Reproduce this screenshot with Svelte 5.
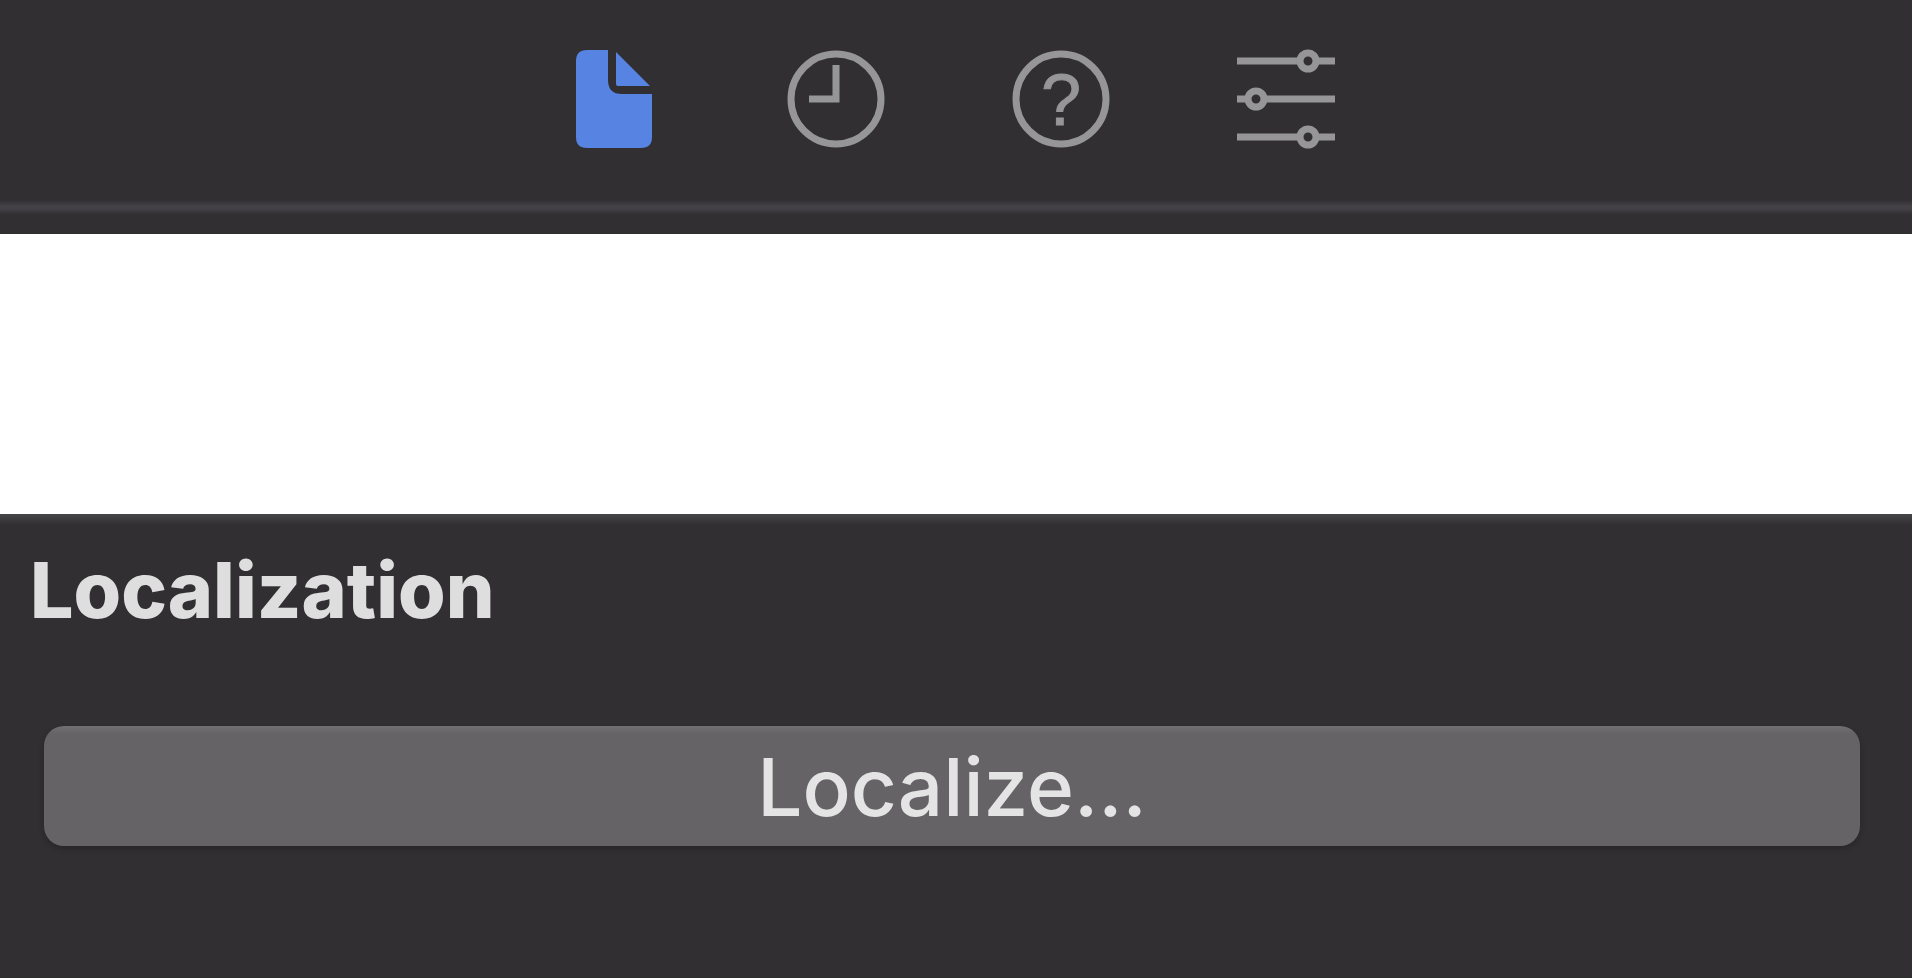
<script lang="ts">
	type Inspector = 'file' | 'history' | 'help' | 'attributes';

	const inspectors: { id: Inspector; label: string }[] = [
		{ id: 'file', label: 'File inspector' },
		{ id: 'history', label: 'History inspector' },
		{ id: 'help', label: 'Quick help inspector' },
		{ id: 'attributes', label: 'Attributes inspector' }
	];

	let active = $state<Inspector>('file');
</script>

<div class="inspector">
	<nav class="tabs" aria-label="Inspectors">
		{#each inspectors as { id, label } (id)}
			<button
				type="button"
				class="tab"
				class:active={active === id}
				aria-label={label}
				aria-pressed={active === id}
				onclick={() => (active = id)}
			>
				<svg viewBox="0 0 98 98" aria-hidden="true">
					{#if id === 'file'}
						<path
							class="solid"
							d="M25 0H46V30Q46 44 60 44H90V87Q90 98 79 98H25Q14 98 14 87V11Q14 0 25 0Z"
						/>
						<path class="solid" d="M54 2L88 36H56Q54 36 54 34Z" />
					{:else if id === 'history'}
						<circle cx="49" cy="49" r="45" />
						<path d="M49 15V49H22" />
					{:else if id === 'help'}
						<circle cx="49" cy="49" r="45" />
						<text x="49" y="75" text-anchor="middle">?</text>
					{:else}
						<path d="M0 11H63M79 11H98M0 49H11M27 49H98M0 87H63M79 87H98" />
						<circle cx="71" cy="11" r="8" />
						<circle cx="19" cy="49" r="8" />
						<circle cx="71" cy="87" r="8" />
					{/if}
				</svg>
			</button>
		{/each}
	</nav>
	<div class="rule"></div>

	<div class="blank"></div>

	<section class="localization">
		<h2>Localization</h2>
		<button type="button" class="push">Localize...</button>
	</section>
</div>

<style>
	:global(body) {
		margin: 0;
		background: #312f32;
	}

	.inspector {
		display: flex;
		flex-direction: column;
		min-height: 100vh;
		background: #312f32;
		color: #dedede;
		font-family: Inter, 'Liberation Sans', sans-serif;
	}

	.tabs {
		display: flex;
		justify-content: center;
		gap: 127px;
		padding: 50px 15px 52px 0;
	}

	.tab {
		width: 98px;
		height: 98px;
		padding: 0;
		border: 0;
		background: none;
		color: #969597;
		cursor: pointer;
	}

	.tab.active {
		color: #5783e3;
	}

	.tab svg {
		display: block;
		width: 100%;
		height: 100%;
		overflow: visible;
		fill: none;
		stroke: currentColor;
		stroke-width: 7;
	}

	.tab .solid {
		fill: currentColor;
		stroke: none;
	}

	.tab text {
		fill: currentColor;
		stroke-width: 1;
		font-size: 72px;
		font-weight: 500;
	}

	/* soft line that closes the tab bar */
	.rule {
		height: 14px;
		margin-bottom: 20px;
		background: linear-gradient(#312f32, #434146 6px, #434146 9px, #312f32);
	}

	.blank {
		height: 280px;
		background: #fff;
	}

	.localization {
		display: flex;
		flex-direction: column;
		gap: 90px;
		padding: 30px 52px 40px 44px;
		background: linear-gradient(#464547, #312f32 11px);
	}

	h2 {
		margin: 0 0 0 -14px;
		font-size: 77px;
		line-height: 92px;
		font-weight: 800;
	}

	.push {
		height: 120px;
		padding: 2px 0 0;
		border: 0;
		border-radius: 20px;
		background: linear-gradient(#717073, #656366 8px);
		box-shadow: 0 3px 6px rgba(0, 0, 0, 0.2);
		color: #e4e4e4;
		font-family: inherit;
		font-size: 80px;
		font-weight: 500;
		line-height: 118px;
	}
</style>
